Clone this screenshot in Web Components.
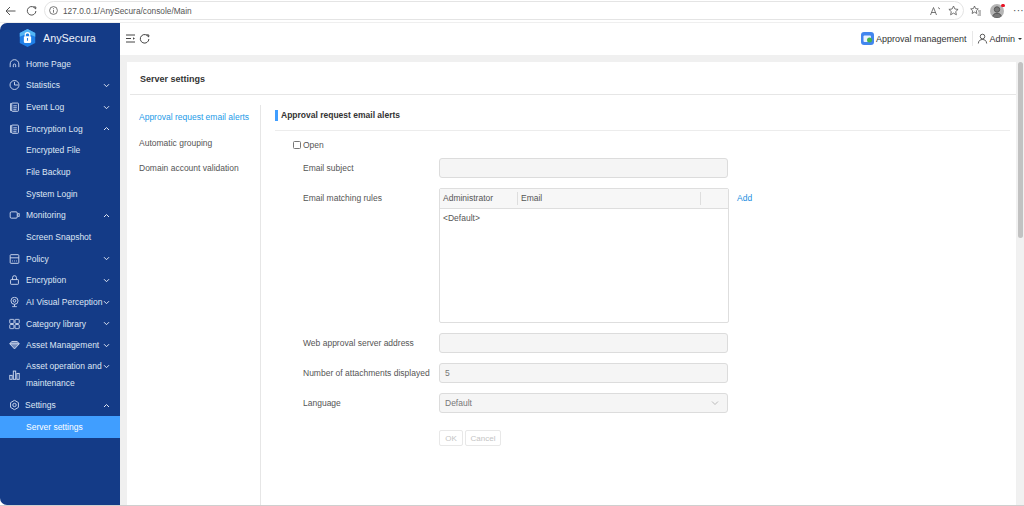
<!DOCTYPE html>
<html>
<head>
<meta charset="utf-8">
<style>
    html, body { margin: 0; height: 100%; overflow: hidden; background: #fff; }
    body { font: 8.5px "Liberation Sans", Arial, sans-serif; color: #333; }
</style>
</head>
<body>
<app-shell></app-shell>

<script>
const svg = (w, h, box, body, extra = "") =>
    `<svg width="${w}" height="${h}" viewBox="${box}" fill="none" stroke="currentColor" ${extra}>${body}</svg>`;

const navIcons = {
    home: `<path d="M1.500 11V7a5.500 5.500 0 0 1 11 0v4"/><path d="M5.500 11V8.500a1.500 1.500 0 0 1 3 0V11"/>`,
    stats: `<circle cx="7" cy="7" r="5.700"/><path d="M7 3v4h4.500"/>`,
    log: `<rect x="3.500" y="2" width="8.500" height="10.500" rx="1"/><path d="M3.500 2.500H2v9h1.500M5.500 5.500h4.500M5.500 8h4.500M5.500 10.500h4"/>`,
    monitor: `<rect x="1.500" y="3" width="9" height="8" rx="1.500"/><path d="M10.500 6l2.500-1v4l-2.500-1"/>`,
    policy: `<rect x="1.500" y="1.500" width="11" height="11" rx="1"/><path d="M1.500 5.500h11M4 9.500h1M6.500 9.500h1M9 9.500h1"/>`,
    lock: `<rect x="2" y="6.500" width="10" height="6" rx=".8"/><path d="M4.500 6.500V4a2.500 2.500 0 0 1 5 0v2.500"/>`,
    ai: `<circle cx="7" cy="5.500" r="4.500"/><circle cx="7" cy="5.500" r="1.700"/><path d="M7 10v2.500M4 13h6"/>`,
    grid: `<rect x="1" y="1" width="5.300" height="5.300" rx=".8"/><rect x="7.700" y="1" width="5.300" height="5.300" rx=".8"/><rect x="1" y="7.700" width="5.300" height="5.300" rx=".8"/><rect x="7.700" y="7.700" width="5.300" height="5.300" rx=".8"/>`,
    gem: `<path d="M3.500 2.500h7l2.500 3-6 6.500-6-6.500z" fill="currentColor" fill-opacity=".5"/><path d="M1 5.500h12"/>`,
    bars: `<rect x="1" y="7.500" width="3" height="5"/><rect x="5.500" y="2" width="3" height="10.500"/><rect x="10" y="5" width="3" height="7.500"/>`,
    gear: `<path d="M7 1l5 3v6l-5 3-5-3V4z"/><circle cx="7" cy="7" r="2.200"/>`,
};

const chevron = (up) => svg(7, 5, "0 0 7 5", `<path d="${up ? "M1 4l2.500-2.500L6 4" : "M1 1.200l2.500 2.500L6 1.200"}"/>`, `stroke-width="1"`);

class NavItem extends HTMLElement {
    constructor() {
        super();
        const icon = this.getAttribute("icon");
        const arrow = this.getAttribute("arrow");
        this.attachShadow({ mode: "open" }).innerHTML = `
            <style>
                :host { display: flex; align-items: center; min-height: 21.650px; color: #dfe6f4; font-size: 8.500px; padding-left: 26px; position: relative; box-sizing: border-box; }
                :host([active]) { background: #409eff; color: #fff; }
                :host([tall]) { height: 38.500px; line-height: 17px; }
                :host([shift]) { padding-left: 25px; }
                .icon { position: absolute; left: 9px; top: 50%; transform: translateY(-50%); width: 11px; height: 11px; display: flex; color: #cfd9ee; }
                .arrow { position: absolute; right: 10px; top: 8.500px; display: flex; }
            </style>
            ${icon ? `<span class="icon">${svg(11, 11, "0 0 14 14", navIcons[icon], `stroke-width="1.200"`)}</span>` : ""}
            <span><slot></slot></span>
            ${arrow ? `<span class="arrow">${chevron(arrow === "up")}</span>` : ""}
        `;
    }
}

class SideNav extends HTMLElement {
    constructor() {
        super();
        this.attachShadow({ mode: "open" }).innerHTML = `
            <style>
                :host { display: block; width: 120px; flex: none; background: #143b87; color: #fff; border-radius: 7px 0 0 7px; box-sizing: border-box; }
                .logo { display: flex; align-items: center; height: 30px; padding-left: 18px; gap: 6px; font-size: 10.800px; color: #eef2fa; }
            </style>
            <div class="logo">
                <svg width="19" height="20" viewBox="0 0 20 22">
                    <path d="M10 1l8.500 4.500v11L10 21l-8.500-4.500v-11z" fill="#1f7fe8"/>
                    <path d="M10 1l8.500 4.500v4L10 6 1.500 9.500v-4z" fill="#53b5f5"/>
                    <rect x="6" y="9" width="8" height="7.500" rx="1.500" fill="#fff"/>
                    <path d="M7.500 9.500V7.500a2.500 2.500 0 0 1 5 0v2" fill="none" stroke="#fff" stroke-width="1.300"/>
                    <rect x="9.400" y="11" width="1.200" height="3" fill="#1f7fe8"/>
                </svg>
                <span>AnySecura</span>
            </div>
            <slot></slot>
        `;
    }
}

class TopBar extends HTMLElement {
    constructor() {
        super();
        this.attachShadow({ mode: "open" }).innerHTML = `
            <style>
                :host { display: flex; align-items: center; height: 32px; flex: none; padding: 0 2px 1px 5px; box-sizing: border-box; background: #fff; color: #333; font-size: 9px; }
                .tools { display: flex; align-items: center; gap: 3px; color: #444; }
                .right { margin-left: auto; display: flex; align-items: center; }
                .approve { display: flex; align-items: center; gap: 2px; padding-right: 6px; border-right: 1px solid #e8e8e8; height: 15px; }
                .user { display: flex; align-items: center; gap: 1px; padding-left: 4px; }
                .caret { width: 0; height: 0; border: 2.500px solid transparent; border-top-color: #333; border-bottom: 0; margin-left: 2px; }
            </style>
            <div class="tools">
                ${svg(11, 11, "0 0 11 11", `<path d="M1 2h9M1 5.500h5M1 9h9"/><path d="M8 4.300v2.400l2-1.200z" fill="currentColor" stroke="none"/>`)}
                ${svg(11, 11, "0 0 11 11", `<path d="M9.500 4a4.300 4.300 0 1 0 .4 2"/><path d="M7.500 1.800l2.400.2-.3 2.200" />`)}
            </div>
            <div class="right">
                <div class="approve">
                    <svg width="13" height="13" viewBox="0 0 13 13">
                        <rect width="13" height="13" rx="3" fill="#4285ee"/>
                        <rect x="2.500" y="3.500" width="7.500" height="6.500" rx="1" fill="#e9f1fd"/>
                        <circle cx="8.500" cy="8" r="2.500" fill="#46b34b"/>
                    </svg>
                    <span>Approval management</span>
                </div>
                <div class="user">
                    ${svg(11, 11, "0 0 11 11", `<circle cx="5.500" cy="3.500" r="2.300"/><path d="M1.300 10.500c.3-3 2-4 4.200-4s3.900 1 4.200 4"/>`, `stroke-width=".8"`)}
                    <span>Admin</span><span class="caret"></span>
                </div>
            </div>
        `;
    }
}

class BrowserBar extends HTMLElement {
    constructor() {
        super();
        this.attachShadow({ mode: "open" }).innerHTML = `
            <style>
                :host { display: flex; align-items: center; height: 23px; flex: none; background: #fff; color: #555; padding: 0 0 1px 5px; box-sizing: border-box; border-bottom: 1px solid #efefef; }
                .icons { display: flex; align-items: center; }
                .back { margin-right: 10px; }
                .pill { margin-left: 7px; width: 920px; height: 19px; box-sizing: border-box; border: 1px solid #e4e4e4; border-radius: 10px; display: flex; align-items: center; padding: 0 4px; font-size: 8.300px; color: #555; flex: none; }
                .pill span { flex: 1; margin-left: 5px; }
                .read { margin-right: 7px; }
                .tail { display: flex; align-items: center; margin-left: 6px; position: relative; }
                .avatar { margin-left: 9px; width: 14px; height: 14px; background: #b5b5b5; border-radius: 50%; overflow: hidden; display: flex; }
                .dot { position: absolute; left: 31px; top: 0; width: 3.500px; height: 3.500px; background: #e81123; border-radius: 50%; }
                .more { margin-left: 9px; font-size: 10px; letter-spacing: .3px; line-height: 8px; color: #444; }
            </style>
            <div class="icons">
                ${svg(11, 10, "0 0 11 10", `<path d="M10.500 5H1M5 1L1 5l4 4"/>`, `class="back"`)}
                ${svg(11, 11, "0 0 11 11", `<path d="M9.500 4a4.300 4.300 0 1 0 .4 2"/><path d="M7.500 1.800l2.400.2-.3 2.200"/>`)}
            </div>
            <div class="pill">
                ${svg(9, 9, "0 0 9 9", `<circle cx="4.500" cy="4.500" r="3.900"/><path d="M4.500 4v2.700M4.500 2.200v1"/>`, `stroke-width=".8"`)}
                <span>127.0.0.1/AnySecura/console/Main</span>
                ${svg(11, 10, "0 0 11 10", `<path d="M.5 9L3.500 1.500 6.500 9M1.500 6.500h4M8 1.500l2 1.500"/>`, `stroke-width=".8" class="read"`)}
                ${svg(11, 11, "0 0 11 11", `<path d="M5.500 1l1.400 3 3.200.4-2.400 2.200.7 3.200-2.900-1.700-2.900 1.700.7-3.200L.9 4.400 4.100 4z"/>`, `stroke-width=".8"`)}
            </div>
            <div class="tail">
                ${svg(11, 11, "0 0 11 11", `<path d="M4.500 1l1.100 2.600 2.700.3-2 1.900.6 2.700-2.400-1.400-2.400 1.400.6-2.700-2-1.900 2.700-.3zM8 6h3M8.500 8h2.500M7.500 10h3.500"/>`, `stroke-width=".8"`)}
                <span class="avatar">${svg(14, 14, "0 0 14 14", `<circle cx="7" cy="5.500" r="2.700" fill="#777"/><path d="M2.500 14c0-3.500 2-4.700 4.500-4.700s4.500 1.200 4.500 4.700z" fill="#777"/>`, `stroke="none"`)}</span>
                <span class="dot"></span>
                <span class="more">···</span>
            </div>
        `;
    }
}

class FormRow extends HTMLElement {
    constructor() {
        super();
        this.attachShadow({ mode: "open" }).innerHTML = `
            <style>
                :host { display: grid; grid-template-columns: 136px auto; align-items: center; color: #555; font-size: 8.500px; }
                :host([top]) { align-items: start; }
                :host([top]) label { padding-top: 5px; }
            </style>
            <label>${this.getAttribute("label") || ""}</label>
            <div><slot></slot></div>
        `;
    }
}

class FieldBox extends HTMLElement {
    constructor() {
        super();
        const select = this.hasAttribute("select");
        this.attachShadow({ mode: "open" }).innerHTML = `
            <style>
                :host { display: flex; align-items: center; width: 289px; height: 20px; box-sizing: border-box; padding: 0 5px; background: #f5f5f5; border: 1px solid #dcdcdc; border-radius: 3px; color: #777; font-size: 8.500px; }
                span { flex: 1; }
                svg { color: #aaa; margin-right: 3px; }
            </style>
            <span><slot></slot></span>
            ${select ? svg(8, 6, "0 0 8 6", `<path d="M1 1.500l3 3 3-3"/>`, `stroke-width=".8"`) : ""}
        `;
    }
}

class RulesTable extends HTMLElement {
    constructor() {
        super();
        this.attachShadow({ mode: "open" }).innerHTML = `
            <style>
                :host { display: block; width: 290px; height: 135px; box-sizing: border-box; border: 1px solid #dedede; border-radius: 2px; color: #555; font-size: 8.500px; position: relative; }
                .head { display: grid; grid-template-columns: 77px 183px 1fr; height: 20px; align-items: center; background: #f7f7f7; border-bottom: 1px solid #dedede; box-sizing: border-box; }
                .head div { padding-left: 3px; height: 13px; line-height: 13px; box-sizing: border-box; }
                .head div + div { border-left: 1px solid #dedede; }
                .row { padding: 4px 3px; }
            </style>
            <div class="head"><div>Administrator</div><div>Email</div><div></div></div>
            <div class="row">&lt;Default&gt;</div>
        `;
    }
}

class SettingsForm extends HTMLElement {
    constructor() {
        super();
        this.attachShadow({ mode: "open" }).innerHTML = `
            <style>
                :host { display: block; flex: 1; padding: 3px 6px 0 14px; min-width: 0; }
                h2 { margin: 0; font-size: 8.500px; font-weight: bold; color: #333; height: 23px; border-bottom: 1px solid #ececec; display: flex; align-items: flex-start; gap: 3px; line-height: 11px; padding-top: 2px; box-sizing: border-box; }
                h2::before { content: ""; width: 3px; height: 11px; background: #409eff; }
                .body { padding: 9px 0 0 28px; display: flex; flex-direction: column; gap: 10px; }
                .open { display: flex; align-items: center; margin: 0 0 -2px -10px; gap: 2px; height: 10px; color: #555; font-size: 8.500px; }
                .box { width: 8px; height: 8px; box-sizing: border-box; border: 1px solid #777; border-radius: 1.500px; background: #fff; flex: none; }
                .tablewrap { display: flex; align-items: flex-start; gap: 8px; }
                a { color: #1d8fe1; font-size: 8.500px; margin-top: 5px; }
                .btns { display: flex; gap: 2px; padding: 7px 0 0 136px; }
                .btn { height: 16px; box-sizing: border-box; border: 1px solid #e8e8e8; border-radius: 2px; color: #c4c4c4; font-size: 8px; display: flex; align-items: center; justify-content: center; }
            </style>
            <h2>Approval request email alerts</h2>
            <div class="body">
                <div class="open"><span class="box"></span>Open</div>
                <form-row label="Email subject"><field-box></field-box></form-row>
                <form-row label="Email matching rules" top>
                    <div class="tablewrap"><rules-table></rules-table><a>Add</a></div>
                </form-row>
                <form-row label="Web approval server address"><field-box></field-box></form-row>
                <form-row label="Number of attachments displayed"><field-box>5</field-box></form-row>
                <form-row label="Language"><field-box select>Default</field-box></form-row>
                <div class="btns"><span class="btn" style="width:24px">OK</span><span class="btn" style="width:36px">Cancel</span></div>
            </div>
        `;
    }
}

class SettingsCard extends HTMLElement {
    constructor() {
        super();
        this.attachShadow({ mode: "open" }).innerHTML = `
            <style>
                :host { display: flex; flex-direction: column; flex: 1; min-height: 0; background: #fff; }
                .title { height: 33px; flex: none; margin-left: 3px; padding: 1px 0 0 10px; box-sizing: border-box; border-bottom: 1px solid #e6e6e6; display: flex; align-items: center; font-size: 9px; font-weight: bold; color: #333; }
                .main { display: flex; flex: 1; min-height: 0; padding-top: 10px; }
                .tabs { width: 134px; flex: none; box-sizing: border-box; border-right: 1px solid #e6e6e6; padding: 7px 0 0 12px; display: flex; flex-direction: column; gap: 15px; color: #555; font-size: 8.500px; line-height: 10.500px; }
                .on { color: #1d9be8; }
            </style>
            <div class="title">Server settings</div>
            <div class="main">
                <div class="tabs">
                    <div class="on">Approval request email alerts</div>
                    <div>Automatic grouping</div>
                    <div>Domain account validation</div>
                </div>
                <settings-form></settings-form>
            </div>
        `;
    }
}

class AppShell extends HTMLElement {
    constructor() {
        super();
        this.attachShadow({ mode: "open" }).innerHTML = `
            <style>
                :host { display: flex; flex-direction: column; height: 506px; width: 1024px; overflow: hidden; }
                .app { display: flex; height: 482px; flex: none; border-bottom: 1px solid #cfcfcf; }
                .content { flex: 1; display: flex; flex-direction: column; min-width: 0; }
                .band { flex: 1; display: flex; min-height: 0; background: #f0f0f0; padding: 7px 0 0 7px; gap: 1px; }
                .bar { width: 7px; flex: none; background: #f1f1f1; position: relative; }
                .thumb { position: absolute; left: 1px; top: 0; width: 5px; height: 176px; background: #c2c2c2; border-radius: 3px; }
            </style>
            <browser-bar></browser-bar>
            <div class="app">
                <side-nav>
                    <nav-item icon="home">Home Page</nav-item>
                    <nav-item icon="stats" arrow="down">Statistics</nav-item>
                    <nav-item icon="log" arrow="down">Event Log</nav-item>
                    <nav-item icon="log" arrow="up">Encryption Log</nav-item>
                    <nav-item>Encrypted File</nav-item>
                    <nav-item>File Backup</nav-item>
                    <nav-item>System Login</nav-item>
                    <nav-item icon="monitor" arrow="up">Monitoring</nav-item>
                    <nav-item>Screen Snapshot</nav-item>
                    <nav-item icon="policy" arrow="down">Policy</nav-item>
                    <nav-item icon="lock" arrow="down">Encryption</nav-item>
                    <nav-item icon="ai" arrow="down">AI Visual Perception</nav-item>
                    <nav-item icon="grid" arrow="down">Category library</nav-item>
                    <nav-item icon="gem" arrow="down">Asset Management</nav-item>
                    <nav-item icon="bars" arrow="down" tall>Asset operation and maintenance</nav-item>
                    <nav-item icon="gear" arrow="up" shift>Settings</nav-item>
                    <nav-item active>Server settings</nav-item>
                </side-nav>
                <div class="content">
                    <top-bar></top-bar>
                    <div class="band">
                        <settings-card></settings-card>
                        <div class="bar"><div class="thumb"></div></div>
                    </div>
                </div>
            </div>
        `;
    }
}

customElements.define("nav-item", NavItem);
customElements.define("side-nav", SideNav);
customElements.define("top-bar", TopBar);
customElements.define("browser-bar", BrowserBar);
customElements.define("form-row", FormRow);
customElements.define("field-box", FieldBox);
customElements.define("rules-table", RulesTable);
customElements.define("settings-form", SettingsForm);
customElements.define("settings-card", SettingsCard);
customElements.define("app-shell", AppShell);
</script>
</body>
</html>
